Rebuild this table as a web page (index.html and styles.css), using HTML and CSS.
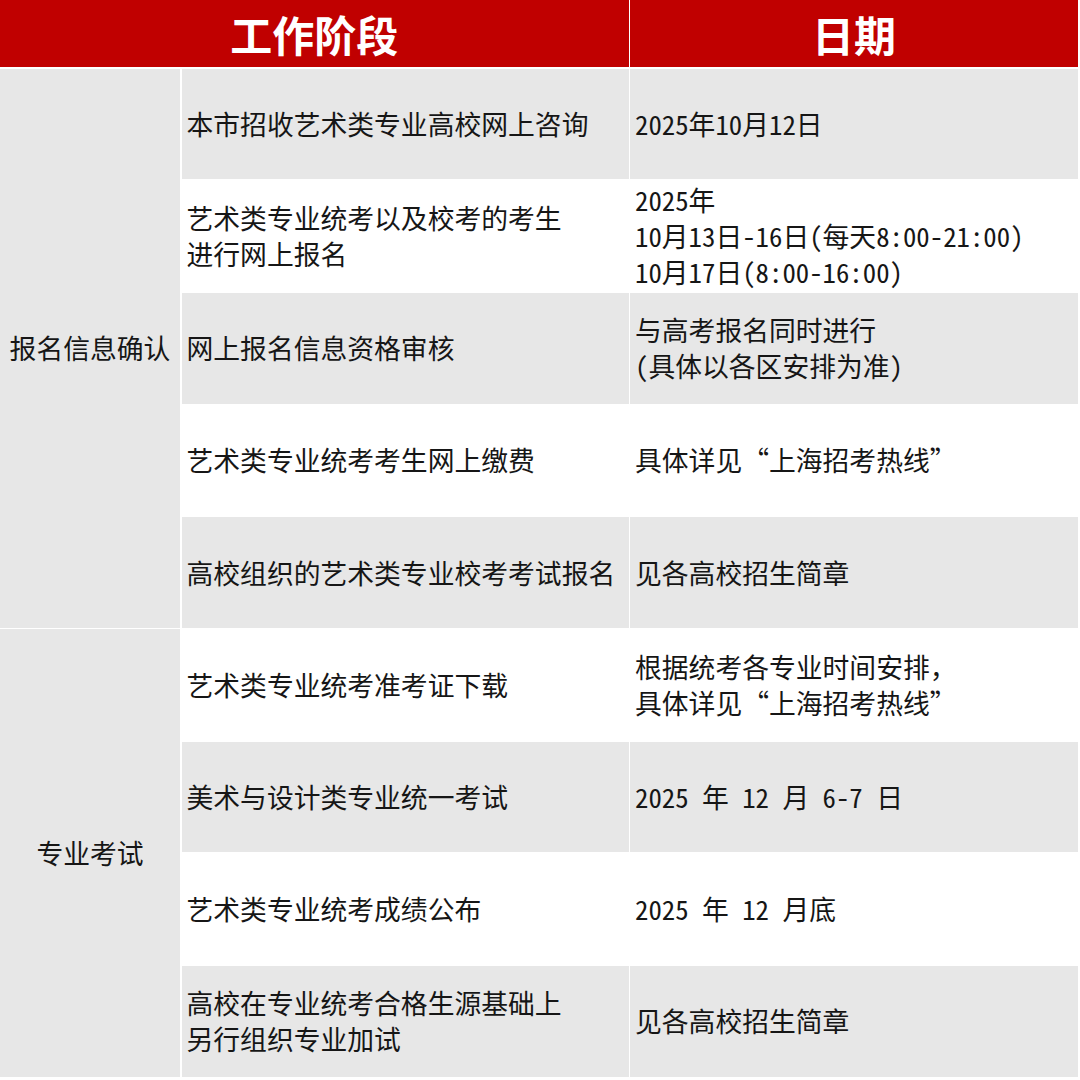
FILE: index.html
```html
<!DOCTYPE html>
<html lang="zh-CN">
<head>
<meta charset="utf-8">
<title>艺术类专业考试日程</title>
<link rel="stylesheet" href="styles.css">
</head>
<body>
<div class="table">
  <div class="head head-stage">工作阶段</div>
  <div class="head head-date">日期</div>

  <div class="cell group group-a">报名信息确认</div>
  <div class="cell gray">本市招收艺术类专业高校网上咨询</div>
  <div class="cell gray">2025年10月12日</div>

  <div class="cell">艺术类专业统考以及校考的考生<br>进行网上报名</div>
  <div class="cell">2025年<br>10月13日-16日(每天8:00-21:00)<br>10月17日(8:00-16:00)</div>

  <div class="cell gray">网上报名信息资格审核</div>
  <div class="cell gray">与高考报名同时进行<br>(具体以各区安排为准)</div>

  <div class="cell">艺术类专业统考考生网上缴费</div>
  <div class="cell">具体详见“上海招考热线”</div>

  <div class="cell gray">高校组织的艺术类专业校考考试报名</div>
  <div class="cell gray">见各高校招生简章</div>

  <div class="cell group group-b">专业考试</div>
  <div class="cell">艺术类专业统考准考证下载</div>
  <div class="cell">根据统考各专业时间安排，<br>具体详见“上海招考热线”</div>

  <div class="cell gray">美术与设计类专业统一考试</div>
  <div class="cell gray">2025 年 12 月 6-7 日</div>

  <div class="cell">艺术类专业统考成绩公布</div>
  <div class="cell">2025 年 12 月底</div>

  <div class="cell gray">高校在专业统考合格生源基础上<br>另行组织专业加试</div>
  <div class="cell gray">见各高校招生简章</div>
</div>
</body>
</html>
```

FILE: styles.css
```css
html, body {
  margin: 0;
  padding: 0;
  background: #ffffff;
}

.table {
  width: 1078px;
  display: grid;
  grid-template-columns: 180px 447px 1fr;
  grid-template-rows: 67px repeat(9, 110.7px);
  column-gap: 1.5px;
  row-gap: 1.5px;
  background: #ffffff;
  font-family: "Noto Sans Mono CJK SC", "Noto Sans CJK SC", sans-serif;
  font-size: 26.8px;
  line-height: 36px;
  color: #161616;
}

.head {
  background: #c00000;
  color: #ffffff;
  font-family: "Noto Sans CJK SC", sans-serif;
  font-weight: 700;
  font-size: 42px;
  display: flex;
  align-items: center;
  justify-content: center;
}

.head-stage {
  grid-column: 1 / 3;
}

.cell {
  display: flex;
  align-items: center;
  padding: 0 5px;
  background: #ffffff;
  white-space: nowrap;
}

.cell.gray {
  background: #e7e7e7;
}

.group {
  background: #e7e7e7;
  justify-content: center;
  padding: 0;
}

.group-a {
  grid-column: 1;
  grid-row: 2 / 7;
}

.group-b {
  grid-column: 1;
  grid-row: 7 / 11;
}
```
